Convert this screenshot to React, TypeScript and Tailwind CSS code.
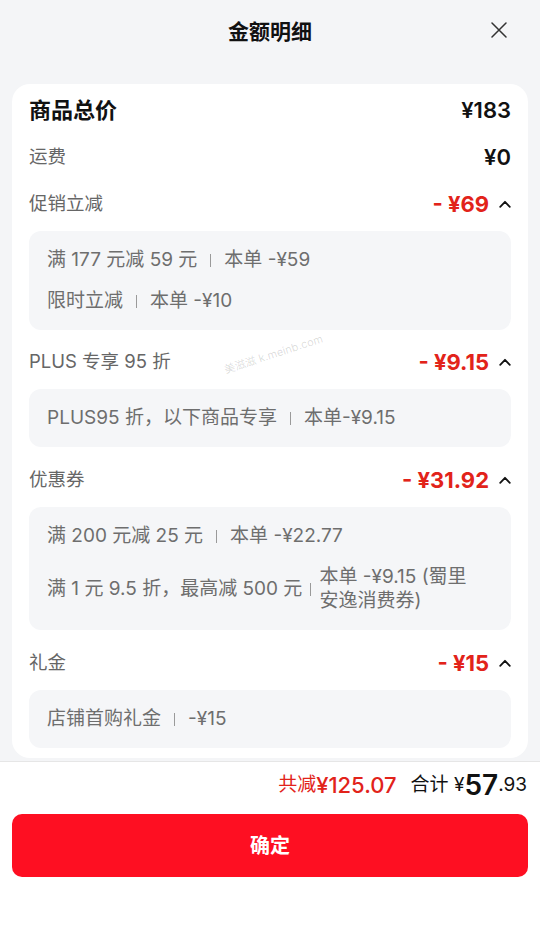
import { ReactNode } from 'react';

const ChevronUp = () => (
  <svg width="12" height="8" viewBox="0 0 12 8" className="flex-shrink-0">
    <polyline points="1.2,6.8 6,1.8 10.8,6.8" fill="none" stroke="#111" strokeWidth="1.8" strokeLinecap="round" strokeLinejoin="round" />
  </svg>
);

const Sep = ({ tight }: { tight?: boolean }) => (
  <span className={`w-px h-[13px] bg-[#9a9a9a] flex-shrink-0 ${tight ? 'mx-[8px]' : 'mx-[13px]'}`} />
);

function Row({ label, amount, strong, red, chevron, className = '' }: {
  label: string;
  amount: string;
  strong?: boolean;
  red?: boolean;
  chevron?: boolean;
  className?: string;
}) {
  return (
    <div className={`h-[32px] flex items-center justify-between ${className}`}>
      <span className={strong ? 'text-[22px] font-bold text-[#111]' : 'text-[18.5px] text-[#666]'}>{label}</span>
      <div className="flex items-center gap-[10px]">
        <span className={`text-[22px] ${red ? 'font-bold text-[#e2231a]' : 'font-semibold text-[#111]'}`}>{amount}</span>
        {chevron && <ChevronUp />}
      </div>
    </div>
  );
}

const Box = ({ children }: { children: ReactNode }) => (
  <div className="mt-[11px] rounded-[12px] bg-[#f5f6f8] pl-[18px] pr-[16px] py-[17px] flex flex-col gap-[17px] text-[19px] leading-[24px] text-[#6e6e6e]">
    {children}
  </div>
);

export default function App() {
  return (
    <div className="w-[540px] h-[930px] flex flex-col bg-[#f4f5f7] font-['Inter','Noto_Sans_CJK_SC',sans-serif] relative overflow-hidden">
      <header className="h-[64px] flex items-center justify-center relative">
        <h1 className="text-[21px] font-bold text-[#111]">金额明细</h1>
        <button className="absolute right-[33px] top-[22px]">
          <svg width="16" height="16" viewBox="0 0 16 16">
            <path d="M1 1L15 15M15 1L1 15" stroke="#333" strokeWidth="1.5" strokeLinecap="round" />
          </svg>
        </button>
      </header>

      <section className="mt-[20px] mx-[12px] rounded-[18px] bg-white px-[17px] pt-[10px] pb-[10px]">
        <Row label="商品总价" amount="¥183" strong />
        <Row label="运费" amount="¥0" className="mt-[15px]" />

        <Row label="促销立减" amount="- ¥69" red chevron className="mt-[15px]" />
        <Box>
          <div className="flex items-center">满 177 元减 59 元<Sep />本单 -¥59</div>
          <div className="flex items-center">限时立减<Sep />本单 -¥10</div>
        </Box>

        <Row label="PLUS 专享 95 折" amount="- ¥9.15" red chevron className="mt-[16px]" />
        <Box>
          <div className="flex items-center">PLUS95 折，以下商品专享<Sep />本单-¥9.15</div>
        </Box>

        <Row label="优惠券" amount="- ¥31.92" red chevron className="mt-[17px]" />
        <Box>
          <div className="flex items-center">满 200 元减 25 元<Sep />本单 -¥22.77</div>
          <div className="flex items-center">
            <span className="flex-shrink-0">满 1 元 9.5 折，最高减 500 元</span>
            <Sep tight />
            <span className="flex-1 min-w-0">本单 -¥9.15 (蜀里<br />安逸消费券)</span>
          </div>
        </Box>

        <Row label="礼金" amount="- ¥15" red chevron className="mt-[17px]" />
        <Box>
          <div className="flex items-center">店铺首购礼金<Sep />-¥15</div>
        </Box>
      </section>

      <footer className="mt-[3px] flex-1 bg-white border-t border-[#e6e6e6] flex flex-col">
        <div className="h-[46px] flex items-center justify-end pr-[13px]">
          <span className="text-[19px] text-[#e2231a]">共减</span>
          <span className="text-[22px] font-medium text-[#e2231a]">¥125.07</span>
          <span className="ml-[14px] text-[19px] text-[#111]">合计 ¥</span>
          <span className="text-[28px] font-semibold text-[#111] leading-none">57</span>
          <span className="text-[19px] text-[#111]">.93</span>
        </div>
        <button className="mt-[6px] mx-[12px] h-[63px] rounded-[10px] bg-[#fe0f22] text-white text-[20px] font-bold">
          确定
        </button>
      </footer>

      <span className="absolute left-[222px] top-[346px] -rotate-[18deg] text-[11px] text-black/15 pointer-events-none">
        美滋滋 k.meinb.com
      </span>
    </div>
  );
}
